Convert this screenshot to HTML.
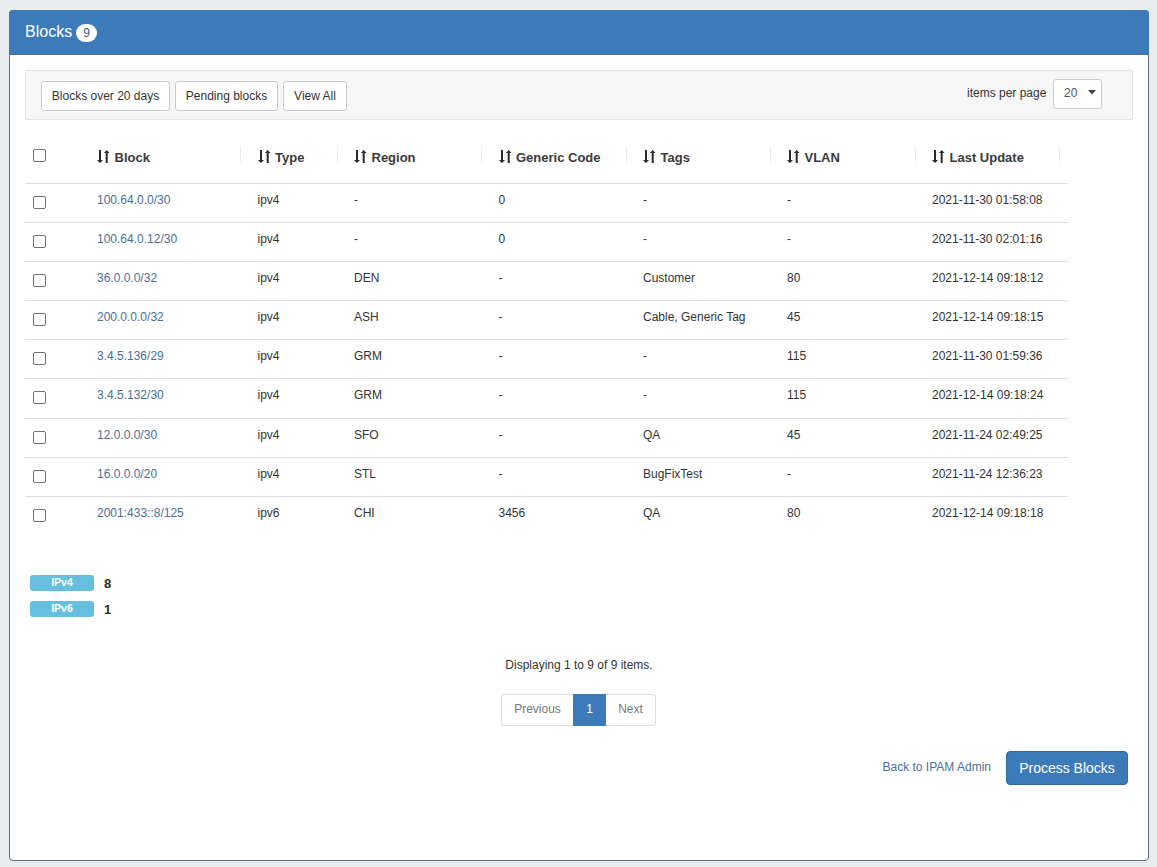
<!DOCTYPE html><html><head><meta charset="utf-8"><style>
*{box-sizing:border-box;margin:0;padding:0}
html,body{width:1157px;height:867px;overflow:hidden}
body{-webkit-font-smoothing:antialiased;background:#e9ecef;font-family:"Liberation Sans",sans-serif;font-size:12px;color:#333;position:relative}
.a{position:absolute;white-space:nowrap}
#panel{position:absolute;left:9px;top:10px;width:1140px;height:851px;background:#fff;border:1px solid #5d6f82;border-radius:4px;overflow:hidden}
#head{position:absolute;left:9px;top:10px;width:1140px;height:45px;background:#3d7ab9;border-bottom:1px solid #4a6a8a;border-radius:4px 4px 0 0}
#well{position:absolute;left:25px;top:70px;width:1108px;height:50px;background:#f6f6f6;border:1px solid #e3e3e3;border-radius:2px}
.btn{position:absolute;height:30px;top:81px;background:#fff;border:1px solid #cccccc;border-radius:3px;font-size:12px;color:#333;line-height:29px;text-align:center}
.th{position:absolute;font-weight:bold;font-size:13px;color:#3a3a3a;line-height:15px}
.ic{position:absolute;top:150px}
.sep{position:absolute;top:146px;width:1px;height:16px;background:#eaeaea}
.hl{position:absolute;left:25px;width:1043px;height:1px;background:#dddddd}
.cb{position:absolute;left:33px;width:13px;height:13px;border:1px solid #707070;border-radius:2px;background:#fff}
.td{position:absolute;font-size:12px;color:#333;line-height:14px;white-space:nowrap}
.lnk{color:#4a6f98}
.lbl{position:absolute;left:30px;width:64px;height:16px;background:#67bfe0;border-radius:3px;color:#fff;font-weight:bold;font-size:10.5px;text-align:center;line-height:14px}
</style></head><body>
<div id="panel"></div><div id="head"></div>
<div class="a" style="left:25px;top:23px;font-size:16px;line-height:18px;color:#fff">Blocks</div>
<div class="a" style="left:76px;top:24px;width:21px;height:18px;border-radius:9px;background:#fff;color:#3d5a78;font-size:12px;line-height:18px;text-align:center">9</div>
<div id="well"></div>
<div class="btn" style="left:41px;width:129px">Blocks over 20 days</div>
<div class="btn" style="left:175px;width:103px">Pending blocks</div>
<div class="btn" style="left:283px;width:64px">View All</div>
<div class="a" style="left:967px;top:86px;line-height:14px;color:#333">items per page</div>
<div class="a" style="left:1053px;top:79px;width:49px;height:30px;background:#fff;border:1px solid #cccccc;border-radius:3px"></div>
<div class="a" style="left:1064px;top:86px;line-height:14px;color:#555">20</div>
<svg class="a" style="left:1088px;top:90px" width="8" height="5" viewBox="0 0 8 5"><path d="M0 0h8l-4 4.5z" fill="#444"/></svg>
<div class="cb" style="top:149px"></div>
<svg class="ic" style="left:97px" width="13" height="13" viewBox="0 0 13 13"><path fill="#2a2a2a" d="M2 0h2v10h2l-3 3l-3-3h2z M8.7 13h2v-10h1.8l-2.8-3l-2.8 3h1.8z"/></svg>
<div class="th" style="left:114.5px;top:150px">Block</div>
<div class="sep" style="left:240px"></div>
<svg class="ic" style="left:257.5px" width="13" height="13" viewBox="0 0 13 13"><path fill="#2a2a2a" d="M2 0h2v10h2l-3 3l-3-3h2z M8.7 13h2v-10h1.8l-2.8-3l-2.8 3h1.8z"/></svg>
<div class="th" style="left:275.0px;top:150px">Type</div>
<div class="sep" style="left:337px"></div>
<svg class="ic" style="left:354px" width="13" height="13" viewBox="0 0 13 13"><path fill="#2a2a2a" d="M2 0h2v10h2l-3 3l-3-3h2z M8.7 13h2v-10h1.8l-2.8-3l-2.8 3h1.8z"/></svg>
<div class="th" style="left:371.5px;top:150px">Region</div>
<div class="sep" style="left:481px"></div>
<svg class="ic" style="left:498.5px" width="13" height="13" viewBox="0 0 13 13"><path fill="#2a2a2a" d="M2 0h2v10h2l-3 3l-3-3h2z M8.7 13h2v-10h1.8l-2.8-3l-2.8 3h1.8z"/></svg>
<div class="th" style="left:516.0px;top:150px">Generic Code</div>
<div class="sep" style="left:626px"></div>
<svg class="ic" style="left:643px" width="13" height="13" viewBox="0 0 13 13"><path fill="#2a2a2a" d="M2 0h2v10h2l-3 3l-3-3h2z M8.7 13h2v-10h1.8l-2.8-3l-2.8 3h1.8z"/></svg>
<div class="th" style="left:660.5px;top:150px">Tags</div>
<div class="sep" style="left:770px"></div>
<svg class="ic" style="left:787px" width="13" height="13" viewBox="0 0 13 13"><path fill="#2a2a2a" d="M2 0h2v10h2l-3 3l-3-3h2z M8.7 13h2v-10h1.8l-2.8-3l-2.8 3h1.8z"/></svg>
<div class="th" style="left:804.5px;top:150px">VLAN</div>
<div class="sep" style="left:915px"></div>
<svg class="ic" style="left:932px" width="13" height="13" viewBox="0 0 13 13"><path fill="#2a2a2a" d="M2 0h2v10h2l-3 3l-3-3h2z M8.7 13h2v-10h1.8l-2.8-3l-2.8 3h1.8z"/></svg>
<div class="th" style="left:949.5px;top:150px">Last Update</div>
<div class="sep" style="left:1059px"></div>
<div class="hl" style="top:183px"></div>
<div class="hl" style="top:222px"></div>
<div class="hl" style="top:261px"></div>
<div class="hl" style="top:300px"></div>
<div class="hl" style="top:339px"></div>
<div class="hl" style="top:378px"></div>
<div class="hl" style="top:418px"></div>
<div class="hl" style="top:457px"></div>
<div class="hl" style="top:496px"></div>
<div class="cb" style="top:196px"></div>
<div class="td lnk" style="left:97px;top:193px">100.64.0.0/30</div>
<div class="td" style="left:257.5px;top:193px">ipv4</div>
<div class="td" style="left:354px;top:193px">-</div>
<div class="td" style="left:498.5px;top:193px">0</div>
<div class="td" style="left:643px;top:193px">-</div>
<div class="td" style="left:787px;top:193px">-</div>
<div class="td" style="left:932px;top:193px">2021-11-30 01:58:08</div>
<div class="cb" style="top:235px"></div>
<div class="td lnk" style="left:97px;top:232px">100.64.0.12/30</div>
<div class="td" style="left:257.5px;top:232px">ipv4</div>
<div class="td" style="left:354px;top:232px">-</div>
<div class="td" style="left:498.5px;top:232px">0</div>
<div class="td" style="left:643px;top:232px">-</div>
<div class="td" style="left:787px;top:232px">-</div>
<div class="td" style="left:932px;top:232px">2021-11-30 02:01:16</div>
<div class="cb" style="top:274px"></div>
<div class="td lnk" style="left:97px;top:271px">36.0.0.0/32</div>
<div class="td" style="left:257.5px;top:271px">ipv4</div>
<div class="td" style="left:354px;top:271px">DEN</div>
<div class="td" style="left:498.5px;top:271px">-</div>
<div class="td" style="left:643px;top:271px">Customer</div>
<div class="td" style="left:787px;top:271px">80</div>
<div class="td" style="left:932px;top:271px">2021-12-14 09:18:12</div>
<div class="cb" style="top:313px"></div>
<div class="td lnk" style="left:97px;top:310px">200.0.0.0/32</div>
<div class="td" style="left:257.5px;top:310px">ipv4</div>
<div class="td" style="left:354px;top:310px">ASH</div>
<div class="td" style="left:498.5px;top:310px">-</div>
<div class="td" style="left:643px;top:310px">Cable, Generic Tag</div>
<div class="td" style="left:787px;top:310px">45</div>
<div class="td" style="left:932px;top:310px">2021-12-14 09:18:15</div>
<div class="cb" style="top:352px"></div>
<div class="td lnk" style="left:97px;top:349px">3.4.5.136/29</div>
<div class="td" style="left:257.5px;top:349px">ipv4</div>
<div class="td" style="left:354px;top:349px">GRM</div>
<div class="td" style="left:498.5px;top:349px">-</div>
<div class="td" style="left:643px;top:349px">-</div>
<div class="td" style="left:787px;top:349px">115</div>
<div class="td" style="left:932px;top:349px">2021-11-30 01:59:36</div>
<div class="cb" style="top:391px"></div>
<div class="td lnk" style="left:97px;top:388px">3.4.5.132/30</div>
<div class="td" style="left:257.5px;top:388px">ipv4</div>
<div class="td" style="left:354px;top:388px">GRM</div>
<div class="td" style="left:498.5px;top:388px">-</div>
<div class="td" style="left:643px;top:388px">-</div>
<div class="td" style="left:787px;top:388px">115</div>
<div class="td" style="left:932px;top:388px">2021-12-14 09:18:24</div>
<div class="cb" style="top:431px"></div>
<div class="td lnk" style="left:97px;top:428px">12.0.0.0/30</div>
<div class="td" style="left:257.5px;top:428px">ipv4</div>
<div class="td" style="left:354px;top:428px">SFO</div>
<div class="td" style="left:498.5px;top:428px">-</div>
<div class="td" style="left:643px;top:428px">QA</div>
<div class="td" style="left:787px;top:428px">45</div>
<div class="td" style="left:932px;top:428px">2021-11-24 02:49:25</div>
<div class="cb" style="top:470px"></div>
<div class="td lnk" style="left:97px;top:467px">16.0.0.0/20</div>
<div class="td" style="left:257.5px;top:467px">ipv4</div>
<div class="td" style="left:354px;top:467px">STL</div>
<div class="td" style="left:498.5px;top:467px">-</div>
<div class="td" style="left:643px;top:467px">BugFixTest</div>
<div class="td" style="left:787px;top:467px">-</div>
<div class="td" style="left:932px;top:467px">2021-11-24 12:36:23</div>
<div class="cb" style="top:509px"></div>
<div class="td lnk" style="left:97px;top:506px">2001:433::8/125</div>
<div class="td" style="left:257.5px;top:506px">ipv6</div>
<div class="td" style="left:354px;top:506px">CHI</div>
<div class="td" style="left:498.5px;top:506px">3456</div>
<div class="td" style="left:643px;top:506px">QA</div>
<div class="td" style="left:787px;top:506px">80</div>
<div class="td" style="left:932px;top:506px">2021-12-14 09:18:18</div>
<div class="lbl" style="top:575px">IPv4</div>
<div class="a" style="left:104px;top:576px;font-weight:bold;font-size:13px;line-height:15px;color:#2a2a2a">8</div>
<div class="lbl" style="top:601px">IPv6</div>
<div class="a" style="left:104px;top:602px;font-weight:bold;font-size:13px;line-height:15px;color:#2a2a2a">1</div>
<div class="a" style="left:0;width:1157px;text-align:center;top:658px;line-height:14px;padding-left:1px">Displaying 1 to 9 of 9 items.</div>
<div class="a" style="left:501px;top:694px;width:73px;height:32px;border:1px solid #ddd;border-radius:3px 0 0 3px;background:#fff;color:#777;line-height:28px;text-align:center">Previous</div>
<div class="a" style="left:573px;top:694px;width:33px;height:32px;background:#3d7ab9;border:1px solid #3d7ab9;color:#fff;line-height:28px;text-align:center">1</div>
<div class="a" style="left:606px;top:694px;width:50px;height:32px;border:1px solid #ddd;border-left:0;border-radius:0 3px 3px 0;background:#fff;color:#777;line-height:28px;text-align:center">Next</div>
<div class="a" style="left:882.5px;top:760px;line-height:14px;color:#4a6f98">Back to IPAM Admin</div>
<div class="a" style="left:1006px;top:751px;width:122px;height:34px;background:#3d7ab9;border:1px solid #2e6da4;border-radius:4px;color:#fff;font-size:14px;line-height:32px;text-align:center">Process Blocks</div>
</body></html>
